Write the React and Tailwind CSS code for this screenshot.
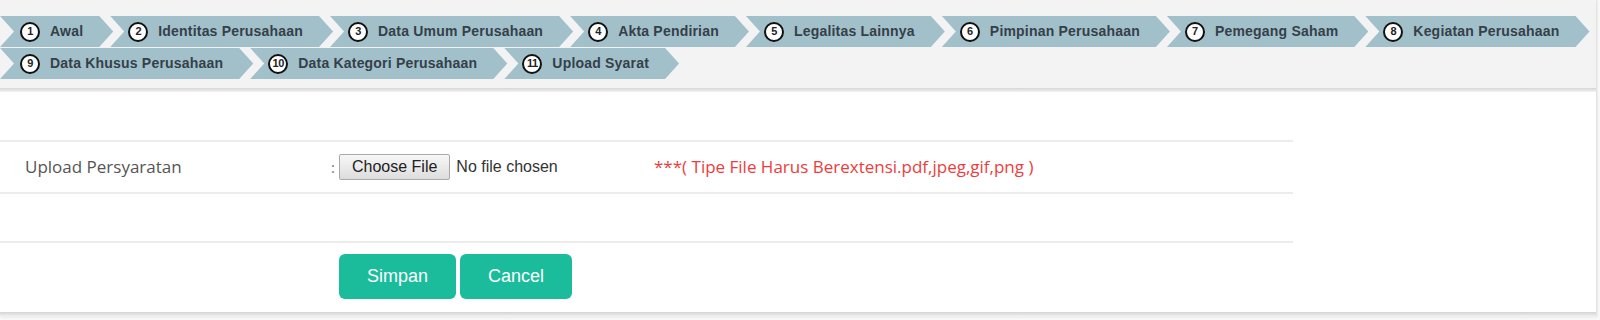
import React from 'react';

const rowOne = [
  { no: 1, label: 'Awal' },
  { no: 2, label: 'Identitas Perusahaan' },
  { no: 3, label: 'Data Umum Perusahaan' },
  { no: 4, label: 'Akta Pendirian' },
  { no: 5, label: 'Legalitas Lainnya' },
  { no: 6, label: 'Pimpinan Perusahaan' },
  { no: 7, label: 'Pemegang Saham' },
  { no: 8, label: 'Kegiatan Perusahaan' },
];

const rowTwo = [
  { no: 9, label: 'Data Khusus Perusahaan' },
  { no: 10, label: 'Data Kategori Perusahaan' },
  { no: 11, label: 'Upload Syarat' },
];

const Step = ({ step, first }) => (
  <div
    className={
      'flex items-center h-[31px] pr-[30px] bg-[#a2c0c9] [clip-path:polygon(0_0,calc(100%_-_14px)_0,100%_50%,calc(100%_-_14px)_100%,0_100%,14px_50%)] ' +
      (first ? 'pl-[20px]' : 'pl-[18px] ml-[-3px]')
    }
  >
    <span className="w-[20px] h-[20px] mr-[10px] shrink-0 rounded-full border-2 border-[#111] bg-white flex items-center justify-center text-[11px] font-bold text-[#222] leading-none tracking-[-0.5px]">
      {step.no}
    </span>
    <span className="text-[14px] font-bold text-[#34404a] whitespace-nowrap tracking-[0.2px]">
      {step.label}
    </span>
  </div>
);

const StepRow = ({ steps }) => (
  <div className="flex">
    {steps.map((s, i) => (
      <Step key={s.no} step={s} first={i === 0} />
    ))}
  </div>
);

export default function App() {
  return (
    <div className="w-[1600px] h-[320px] bg-[#f8f8f8] overflow-hidden font-['Liberation_Sans',Arial,sans-serif]">
      <div className="w-[1596px] shadow-[1px_0_2px_rgba(0,0,0,0.12)]">
        {/* Wizard steps */}
        <div className="h-[88px] bg-[#f3f3f3] pt-[16px] flex flex-col gap-[1px]">
          <StepRow steps={rowOne} />
          <StepRow steps={rowTwo} />
        </div>
        <div className="h-[4px] bg-gradient-to-b from-[#d6d6d6] to-[#f2f2f2]" />

        {/* Form */}
        <div className="bg-white pt-[48px] pb-[13px]">
          <div className="w-[1293px]">
            <div className="h-[52px] border-t-2 border-[#ececec] flex items-center font-['Open_Sans',sans-serif] text-[17px]">
              <div className="w-[331px] pl-[25px] text-[#555]">Upload Persyaratan</div>
              <div className="w-[323px] flex items-center">
                <span className="text-[#777] text-[15px] mr-[4px]">:</span>
                <span className="h-[26px] px-[12px] flex items-center border border-[#a9a9a9] rounded-[2px] bg-gradient-to-b from-[#f7f7f7] to-[#dddddd] text-[16px] text-[#222] font-['Liberation_Sans',Arial,sans-serif]">
                  Choose File
                </span>
                <span className="ml-[6px] text-[16px] text-[#333] font-['Liberation_Sans',Arial,sans-serif]">
                  No file chosen
                </span>
              </div>
              <div className="text-[#ec3d3d]">***( Tipe File Harus Berextensi.pdf,jpeg,gif,png )</div>
            </div>
            <div className="h-[49px] border-t-2 border-[#ececec]" />
            <div className="border-t-2 border-[#ececec] pt-[11px] pl-[339px] flex gap-[4px]">
              <button className="h-[45px] px-[28px] rounded-[6px] bg-[#1abc9c] text-white text-[18px]">
                Simpan
              </button>
              <button className="h-[45px] px-[28px] rounded-[6px] bg-[#1abc9c] text-white text-[18px]">
                Cancel
              </button>
            </div>
          </div>
        </div>
        <div className="h-[5px] bg-gradient-to-b from-[#d4d4d4] to-[#f4f4f4]" />
      </div>
    </div>
  );
}
